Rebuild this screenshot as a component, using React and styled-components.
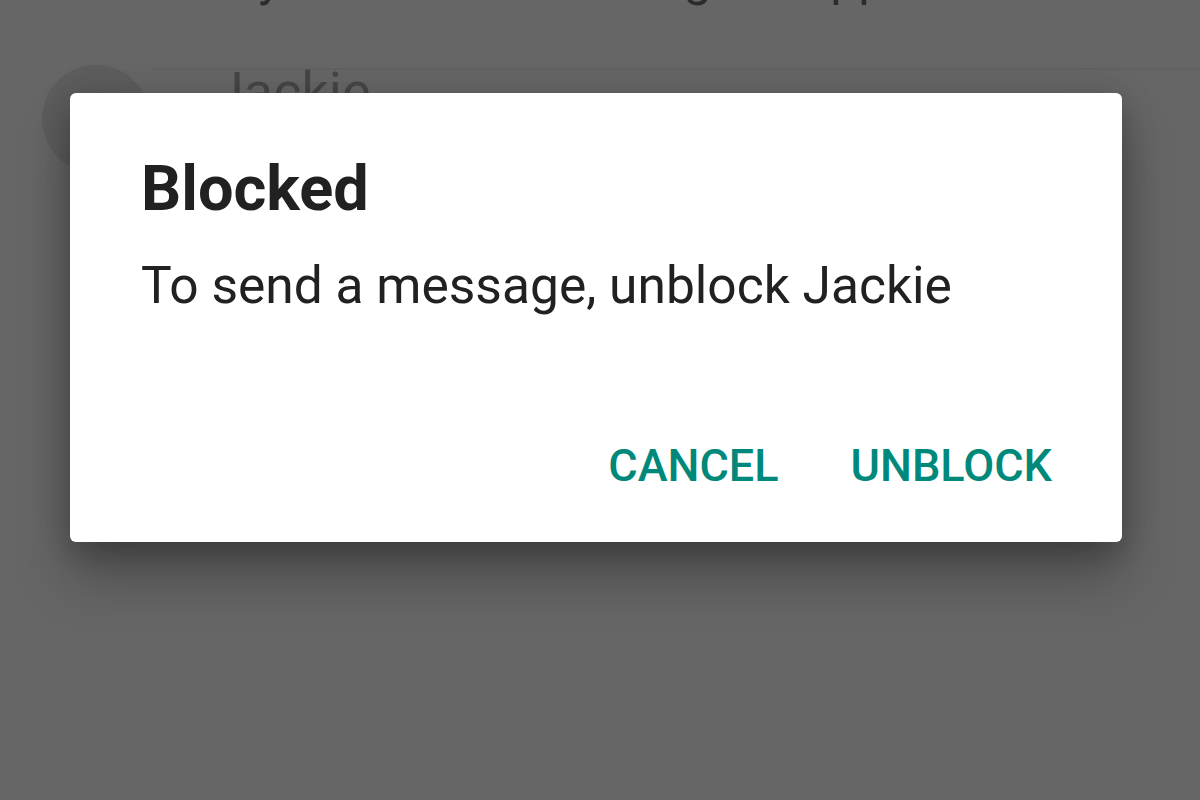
import React from "react";
import styled, { createGlobalStyle } from "styled-components";

const GlobalStyle = createGlobalStyle`
  html, body {
    margin: 0;
    padding: 0;
    background: #fff;
    overflow: hidden;
  }
  * {
    box-sizing: border-box;
  }
`;

const Screen = styled.div`
  position: relative;
  width: 1200px;
  height: 800px;
  overflow: hidden;
  background: #fff;
  font-family: Roboto, "Noto Sans", sans-serif;
`;

// the chat screen that sits behind the dialog
const HeaderLine = styled.div`
  margin-top: -52px;
  padding-left: 184px;
  height: 117px;
  font-size: 50px;
  line-height: 60px;
  color: #6e6e6e;
  white-space: pre;
`;

const ContactRow = styled.div`
  display: flex;
  align-items: flex-start;
`;

const Avatar = styled.div`
  flex: none;
  width: 108px;
  height: 108px;
  margin-left: 42px;
  border-radius: 50%;
  background: #e9e9e9;
  position: relative;
  z-index: 1;
`;

const ContactInfo = styled.div`
  flex: 1;
  margin-top: 3px;
  padding-left: 64px;
  padding-top: 2px;
  border-top: 2px solid #f2f2f2;
`;

const ContactName = styled.div`
  font-size: 54px;
  line-height: 40px;
  color: #b0b0b0;
`;

const Scrim = styled.div`
  position: absolute;
  inset: 0;
  z-index: 2;
  background: rgba(0, 0, 0, 0.6);
  display: flex;
  align-items: flex-start;
  padding: 93px 0 0 70px;
`;

const Dialog = styled.div`
  width: 1052px;
  background: #fff;
  border-radius: 6px;
  padding: 64px 0 20px 71px;
  display: flex;
  flex-direction: column;
  box-shadow: 0 36px 56px rgba(0, 0, 0, 0.26), 0 12px 26px rgba(0, 0, 0, 0.16),
    0 0 40px rgba(0, 0, 0, 0.08);
`;

const Title = styled.h2`
  margin: 0;
  font-size: 63px;
  font-weight: 700;
  line-height: 1;
  color: #212121;
`;

const Message = styled.p`
  margin: 40px 0 0;
  font-size: 51.5px;
  font-weight: 400;
  line-height: 1;
  color: #212121;
`;

const Actions = styled.div`
  display: flex;
  justify-content: flex-end;
  gap: 22px;
  margin-top: 98px;
  padding-right: 45px;
`;

const ActionButton = styled.button`
  height: 112px;
  padding: 0 25px;
  border: none;
  background: transparent;
  font-family: Roboto, "Noto Sans", sans-serif;
  font-size: 45px;
  font-weight: 500;
  line-height: 1;
  color: #00897b;
  text-transform: uppercase;
  cursor: pointer;
`;

export default function App() {
  return (
    <>
      <GlobalStyle />
      <Screen>
        <HeaderLine>Only it can now message in app</HeaderLine>
        <ContactRow>
          <Avatar />
          <ContactInfo>
            <ContactName>Jackie</ContactName>
          </ContactInfo>
        </ContactRow>
        <Scrim>
          <Dialog role="dialog">
            <Title>Blocked</Title>
            <Message>To send a message, unblock Jackie</Message>
            <Actions>
              <ActionButton>Cancel</ActionButton>
              <ActionButton>Unblock</ActionButton>
            </Actions>
          </Dialog>
        </Scrim>
      </Screen>
    </>
  );
}
